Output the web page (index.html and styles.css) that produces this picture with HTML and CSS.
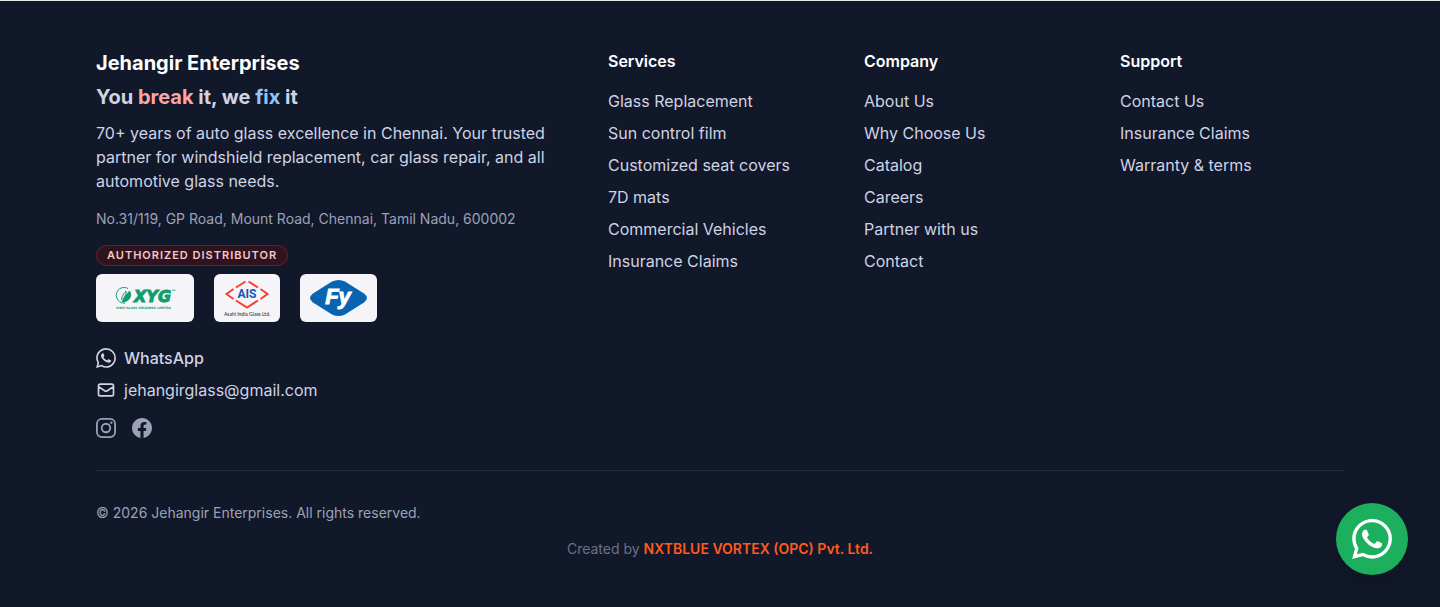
FILE: index.html
```html
<!DOCTYPE html>
<html lang="en">
<head>
  <meta charset="UTF-8" />
  <meta name="viewport" content="width=device-width, initial-scale=1.0" />
  <title>Jehangir Enterprises</title>
  <link rel="stylesheet" href="styles.css">
</head>
<body>
  <svg class="sprite" aria-hidden="true">
    <symbol id="whatsapp" viewBox="0 0 24 24">
      <path fill="currentColor" d="M17.472 14.382c-.297-.149-1.758-.867-2.03-.967-.273-.099-.471-.148-.67.15-.197.297-.767.966-.94 1.164-.173.199-.347.223-.644.075-.297-.15-1.255-.463-2.39-1.475-.883-.788-1.48-1.761-1.653-2.059-.173-.297-.018-.458.13-.606.134-.133.298-.347.446-.52.149-.174.198-.298.298-.497.099-.198.05-.371-.025-.52-.075-.149-.669-1.612-.916-2.207-.242-.579-.487-.5-.669-.51-.173-.008-.371-.01-.57-.01-.198 0-.52.074-.792.372-.272.297-1.04 1.016-1.04 2.479 0 1.462 1.065 2.875 1.213 3.074.149.198 2.096 3.2 5.077 4.487.709.306 1.262.489 1.694.625.712.227 1.36.195 1.871.118.571-.085 1.758-.719 2.006-1.413.248-.694.248-1.289.173-1.413-.074-.124-.272-.198-.57-.347m-5.421 7.403h-.004a9.87 9.87 0 01-5.031-1.378l-.361-.214-3.741.982.998-3.648-.235-.374a9.86 9.86 0 01-1.51-5.26c.001-5.45 4.436-9.884 9.888-9.884 2.64 0 5.122 1.03 6.988 2.898a9.825 9.825 0 012.893 6.994c-.003 5.45-4.437 9.884-9.885 9.884m8.413-18.297A11.815 11.815 0 0012.05 0C5.495 0 .16 5.335.157 11.892c0 2.096.547 4.142 1.588 5.945L.057 24l6.305-1.654a11.882 11.882 0 005.683 1.448h.005c6.554 0 11.89-5.335 11.893-11.893a11.821 11.821 0 00-3.48-8.413z"/>
    </symbol>
  </svg>

  <footer class="footer">
    <div class="container">
      <div class="footer-grid">
        <div class="brand">
          <h2>Jehangir Enterprises</h2>
          <p class="tagline">You <span class="break">break</span> it, we <span class="fix">fix</span> it</p>
          <p class="about">70+ years of auto glass excellence in Chennai. Your trusted partner for windshield replacement, car glass repair, and all automotive glass needs.</p>
          <p class="address">No.31/119, GP Road, Mount Road, Chennai, Tamil Nadu, 600002</p>

          <span class="badge">Authorized Distributor</span>
          <div class="logos">
            <div class="logo">
              <svg width="78" height="36" viewBox="0 0 78 36" role="img" aria-label="XYG">
                <g fill="none" stroke="#0f9d6c">
                  <path d="M22 8.500A7.800 7.800 0 1 0 19 23"/>
                  <path d="M17 22c-3-4 0-7 3-11 1 4-3 6-3 11z"/>
                  <path d="M17.500 22c0-5 3-7 6-11 3 5 0 10-6 11z" fill="#0f9d6c"/>
                </g>
                <text class="xyg-name" x="28" y="22">XYG</text>
                <text class="xyg-mark" x="66" y="11">TM</text>
                <text class="xyg-sub" x="10" y="29">XINYI GLASS HOLDINGS LIMITED</text>
              </svg>
            </div>
            <div class="logo">
              <svg width="46" height="40" viewBox="0 0 46 40" role="img" aria-label="AIS">
                <path d="M12 9.500L21.500 3.500M24.500 3.500L34 9.500M36.500 11L43.500 16 36.500 21M34 22.500L23 29.500 12 22.500M9.500 21L2.500 16 9.500 11" fill="none" stroke="#ff3d2e" stroke-width="2"/>
                <text class="ais-name" x="23" y="20">AIS</text>
                <text class="ais-sub" x="23" y="38">Asahi India Glass Ltd.</text>
              </svg>
            </div>
            <div class="logo">
              <svg width="57" height="36" viewBox="0 0 57 36" role="img" aria-label="FY">
                <path d="M22 1.500Q28.500-1.500 35 1.500L54 13.500Q60 18 54 22.500L35 34.500Q28.500 37.500 22 34.500L3 22.500Q-3 18 3 13.500z" fill="#0864b1"/>
                <text class="fy-name" x="28" y="24">Fy</text>
              </svg>
            </div>
          </div>

          <div class="contact">
            <a href="#whatsapp-chat" class="strong"><svg width="20" height="20"><use href="#whatsapp"/></svg>WhatsApp</a>
            <a href="mailto:jehangirglass@gmail.com">
              <svg width="20" height="20" viewBox="0 0 24 24" fill="none" stroke="currentColor" stroke-width="2" stroke-linecap="round" stroke-linejoin="round"><path d="M3 8l7.890 5.260a2 2 0 002.220 0L21 8M5 19h14a2 2 0 002-2V7a2 2 0 00-2-2H5a2 2 0 00-2 2v10a2 2 0 002 2z"/></svg>jehangirglass@gmail.com</a>
          </div>

          <div class="social">
            <a href="#instagram" aria-label="Instagram">
              <svg width="20" height="20" viewBox="0 0 24 24" fill="none" stroke="currentColor" stroke-width="2.160"><rect x="1.080" y="1.080" width="21.840" height="21.840" rx="6"/><circle cx="12" cy="12" r="5.080"/><circle cx="18.400" cy="5.600" r="1.440" fill="currentColor" stroke="none"/></svg>
            </a>
            <a href="#facebook" aria-label="Facebook">
              <svg width="20" height="20" viewBox="0 0 24 24" fill="currentColor"><path d="M24 12.073c0-6.627-5.373-12-12-12s-12 5.373-12 12c0 5.990 4.388 10.954 10.125 11.854v-8.385H7.078v-3.470h3.047V9.430c0-3.007 1.792-4.669 4.533-4.669 1.312 0 2.686.235 2.686.235v2.953H15.830c-1.491 0-1.956.925-1.956 1.874v2.250h3.328l-.532 3.470h-2.796v8.385C19.612 23.027 24 18.062 24 12.073z"/></svg>
            </a>
          </div>
        </div>

        <nav aria-label="Services">
          <h3>Services</h3>
          <ul>
            <li><a href="#glass">Glass Replacement</a></li>
            <li><a href="#film">Sun control film</a></li>
            <li><a href="#seats">Customized seat covers</a></li>
            <li><a href="#mats">7D mats</a></li>
            <li><a href="#commercial">Commercial Vehicles</a></li>
            <li><a href="#insurance">Insurance Claims</a></li>
          </ul>
        </nav>

        <nav aria-label="Company">
          <h3>Company</h3>
          <ul>
            <li><a href="#about">About Us</a></li>
            <li><a href="#why">Why Choose Us</a></li>
            <li><a href="#catalog">Catalog</a></li>
            <li><a href="#careers">Careers</a></li>
            <li><a href="#partner">Partner with us</a></li>
            <li><a href="#contact">Contact</a></li>
          </ul>
        </nav>

        <nav aria-label="Support">
          <h3>Support</h3>
          <ul>
            <li><a href="#contact">Contact Us</a></li>
            <li><a href="#insurance">Insurance Claims</a></li>
            <li><a href="#warranty">Warranty &amp; terms</a></li>
          </ul>
        </nav>
      </div>

      <div class="footer-bottom">
        <p>© 2026 Jehangir Enterprises. All rights reserved.</p>
        <p class="credit">Created by <a href="#nxtblue">NXTBLUE VORTEX (OPC) Pvt. Ltd.</a></p>
      </div>
    </div>
  </footer>

  <a href="#whatsapp-chat" class="whatsapp-float" aria-label="Chat on WhatsApp"><svg width="40" height="40"><use href="#whatsapp"/></svg></a>
</body>
</html>
```
FILE: styles.css
```css
:root {
  --fondo: #111829;
  --white: #ffffff;
  --text: #cfd3e4;
  --muted: #9ca1b6;
  --dim: #6b7285;
  --line: #222a3b;
  --orange: #ff5a1f;
  --green: #1cb05e;
}

* {
  box-sizing: border-box;
}

body,
h2,
h3,
p,
ul {
  margin: 0;
  padding: 0;
}

body {
  font-family: Inter, "Liberation Sans", sans-serif;
  font-size: 16px;
  line-height: 24px;
  background-color: var(--fondo);
  color: var(--text);
}

a {
  color: inherit;
  text-decoration: none;
}

a:hover {
  color: var(--white);
}

ul {
  list-style: none;
}

svg {
  display: block;
  flex-shrink: 0;
}

.sprite {
  position: absolute;
  width: 0;
  height: 0;
}

.footer {
  border-top: 1px solid #e5e7eb;
  background-color: var(--fondo);
}

.container {
  max-width: 1280px;
  margin: 0 auto;
  padding: 48px 16px;
}

.footer-grid {
  display: grid;
  grid-template-columns: repeat(5, 1fr);
  gap: 32px;
}

.brand {
  grid-column: span 2;
}

.brand h2,
.tagline {
  font-size: 20px;
  line-height: 28px;
  font-weight: 700;
}

.brand h2 {
  color: var(--white);
  margin-bottom: 6px;
}

.tagline {
  margin-bottom: 10px;
}

.break {
  color: #fca5a5;
}

.fix {
  color: #93c5fd;
}

.about {
  margin-bottom: 16px;
}

.address {
  font-size: 14px;
  line-height: 20px;
  color: var(--muted);
  margin-bottom: 16px;
}

.badge {
  display: block;
  width: fit-content;
  padding: 2px 10px;
  border: 1px solid #6b2028;
  border-radius: 999px;
  background-color: #2f141d;
  color: #f5c6cc;
  font-size: 11px;
  line-height: 15px;
  font-weight: 600;
  letter-spacing: 1px;
  text-transform: uppercase;
}

.logos {
  display: flex;
  gap: 20px;
  margin-top: 8px;
}

.logo {
  display: flex;
  align-items: center;
  height: 48px;
  padding: 0 10px;
  border-radius: 6px;
  background-color: #f4f4f9;
}

.logo svg {
  overflow: visible;
}

.xyg-name,
.xyg-mark,
.xyg-sub {
  fill: #0f9d6c;
  font-family: "DejaVu Sans", sans-serif;
  font-weight: 700;
}

.xyg-name {
  font-size: 16px;
  font-style: italic;
  stroke: #0f9d6c;
}

.xyg-mark {
  font-size: 2px;
}

.xyg-sub {
  font-size: 3px;
}

.ais-name,
.ais-sub {
  text-anchor: middle;
}

.ais-name {
  fill: #1259b5;
  font-family: Roboto, sans-serif;
  font-size: 12px;
  font-weight: 700;
}

.ais-sub {
  fill: #22222a;
  font-family: Lato, sans-serif;
  font-size: 5px;
}

.fy-name {
  fill: #ffffff;
  stroke: #ffffff;
  font-family: "Liberation Sans", sans-serif;
  font-size: 22px;
  font-style: italic;
  font-weight: 700;
  text-anchor: middle;
}

.contact {
  display: flex;
  flex-direction: column;
  align-items: flex-start;
  gap: 8px;
  margin-top: 24px;
}

.contact a {
  display: flex;
  align-items: center;
  gap: 8px;
}

.contact .strong {
  font-weight: 500;
}

.social {
  display: flex;
  gap: 16px;
  margin-top: 16px;
  color: var(--muted);
}

h3 {
  font-size: 16px;
  line-height: 24px;
  font-weight: 600;
  color: var(--white);
  margin-bottom: 16px;
}

nav ul {
  display: flex;
  flex-direction: column;
  gap: 8px;
}

.footer-bottom {
  margin-top: 32px;
  padding-top: 32px;
  border-top: 1px solid var(--line);
  font-size: 14px;
  line-height: 20px;
  color: var(--muted);
}

.credit {
  margin-top: 16px;
  text-align: center;
  color: var(--dim);
}

.credit a {
  color: var(--orange);
  font-weight: 600;
}

.whatsapp-float {
  position: fixed;
  right: 32px;
  bottom: 32px;
  display: flex;
  align-items: center;
  justify-content: center;
  width: 72px;
  height: 72px;
  border-radius: 50%;
  background-color: var(--green);
  color: var(--white);
  box-shadow: 0 10px 20px rgba(0, 0, 0, 0.15);
}
```
